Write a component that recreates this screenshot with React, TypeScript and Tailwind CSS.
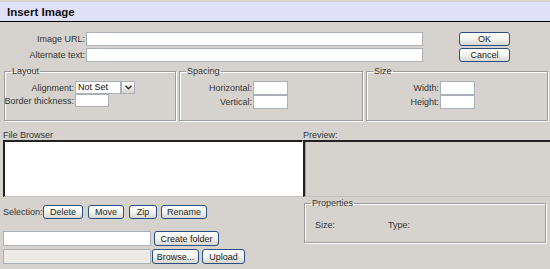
import React from 'react';

const btn =
  'h-[14px] rounded-[3px] border border-[#2b4f84] bg-gradient-to-b from-white via-[#f4f4f0] to-[#d8d8d0] text-[9px] leading-[12px] text-[#222] flex items-center justify-center whitespace-nowrap';
const inp = 'border border-[#a9b0b8] bg-white';
const fs =
  'border border-[#9c9c9c] shadow-[inset_1px_1px_0_#fff,1px_1px_0_#fff] rounded-none';
const legend = 'ml-[6px] px-[1px] text-[9px] leading-[10px] text-[#333]';

function Field({ label, labelW, inputW, h = 14 }: { label: string; labelW: number; inputW: number; h?: number }) {
  return (
    <div className="flex items-center">
      <div className="flex justify-end pr-[1px] text-[#333] whitespace-nowrap shrink-0" style={{ width: labelW }}>
        <span className="shrink-0">{label}</span>
      </div>
      <div className={`${inp} shrink-0`} style={{ width: inputW, height: h }} />
    </div>
  );
}

export default function App() {
  return (
    <div className="w-[550px] h-[269px] overflow-hidden bg-[#d6d3ce] font-['Liberation_Sans',Arial,sans-serif] text-[9px] leading-[10px] text-[#222]">
      <div className="mt-[2px] h-[20px] bg-[#e0e0f8] border-b border-black flex items-center pl-[7px]">
        <span className="text-[11.5px] font-bold text-[#111]">Insert Image</span>
      </div>

      <div className="flex mt-[10px]">
        <div className="flex flex-col gap-[2px]">
          <Field label="Image URL:" labelW={86} inputW={337} />
          <Field label="Alternate text:" labelW={86} inputW={337} />
        </div>
        <div className="ml-[36px] flex flex-col gap-[2px]">
          <button className={`${btn} w-[51px]`}>OK</button>
          <button className={`${btn} w-[51px]`}>Cancel</button>
        </div>
      </div>

      <div className="flex mt-[4px] pl-[4px] h-[55px]">
        <fieldset className={`${fs} w-[172px] pb-[4px]`}>
          <legend className={legend}>Layout</legend>
          <div className="flex flex-col pt-[5px]">
            <div className="flex items-center">
              <div className="w-[70px] text-right pr-[1px] text-[#333] whitespace-nowrap">Alignment:</div>
              <div className="flex items-center h-[13px]">
                <div className={`${inp} w-[46px] h-[13px] pl-[2px] leading-[11px] text-[#111]`}>Not Set</div>
                <div className="w-[14px] h-[13px] border border-[#a9b0b8] bg-gradient-to-b from-white to-[#d6d6ce] flex items-center justify-center">
                  <svg width="7" height="5" viewBox="0 0 7 5">
                    <path d="M0.5 0.8 L3.5 3.8 L6.5 0.8" fill="none" stroke="#333" strokeWidth="1.5" />
                  </svg>
                </div>
              </div>
            </div>
            <Field label="Border thickness:" labelW={70} inputW={34} h={13} />
          </div>
        </fieldset>

        <fieldset className={`${fs} ml-[3px] w-[184px]`}>
          <legend className={legend}>Spacing</legend>
          <div className="flex flex-col pt-[5px]">
            <Field label="Horizontal:" labelW={73} inputW={35} />
            <Field label="Vertical:" labelW={73} inputW={35} />
          </div>
        </fieldset>

        <fieldset className={`${fs} ml-[3px] w-[182px]`}>
          <legend className={legend}>Size</legend>
          <div className="flex flex-col pt-[5px]">
            <Field label="Width:" labelW={73} inputW={35} />
            <Field label="Height:" labelW={73} inputW={35} />
          </div>
        </fieldset>
      </div>

      <div className="flex mt-[10px] pl-[3px]">
        <div className="w-[300px]">
          <div className="h-[9px] leading-[9px] text-[#333]">File Browser</div>
          <div className="h-[57px] bg-white border-t-2 border-l-2 border-[#222] border-b border-r border-b-[#c0c0c0] border-r-white" />
        </div>
        <div className="flex-1">
          <div className="h-[9px] leading-[9px] text-[#333]">Preview:</div>
          <div className="h-[57px] border-t-2 border-l-2 border-[#222] border-b border-b-[#c0c0c0] shadow-[inset_1px_0_0_#a0a0a0]" />
        </div>
      </div>

      <div className="flex pl-[3px]">
        <div className="w-[300px] flex flex-col">
          <div className="flex items-center mt-[8px] h-[13px]">
            <span className="w-[40px] text-[#333]">Selection:</span>
            <button className={`${btn} h-[13px] w-[40px]`}>Delete</button>
            <button className={`${btn} h-[13px] w-[36px] ml-[5px]`}>Move</button>
            <button className={`${btn} h-[13px] w-[28px] ml-[5px]`}>Zip</button>
            <button className={`${btn} h-[13px] w-[46px] ml-[4px]`}>Rename</button>
          </div>
          <div className="flex items-center mt-[13px]">
            <div className={`${inp} w-[148px] h-[15px]`} />
            <button className={`${btn} h-[15px] w-[65px] ml-[3px]`}>Create folder</button>
          </div>
          <div className="flex items-center mt-[3px]">
            <div className="w-[148px] h-[15px] border border-[#a9b0b8] bg-[#ecebe6]" />
            <button className={`${btn} h-[15px] w-[47px] ml-[1px]`}>Browse...</button>
            <button className={`${btn} h-[15px] w-[43px] ml-[3px]`}>Upload</button>
          </div>
        </div>
        <fieldset className={`${fs} ml-[1px] w-[242px] h-[45px] mt-[1px]`}>
          <legend className={legend}>Properties</legend>
          <div className="flex pt-[12px] pl-[10px] text-[#333]">
            <span className="w-[73px]">Size:</span>
            <span>Type:</span>
          </div>
        </fieldset>
      </div>
    </div>
  );
}
